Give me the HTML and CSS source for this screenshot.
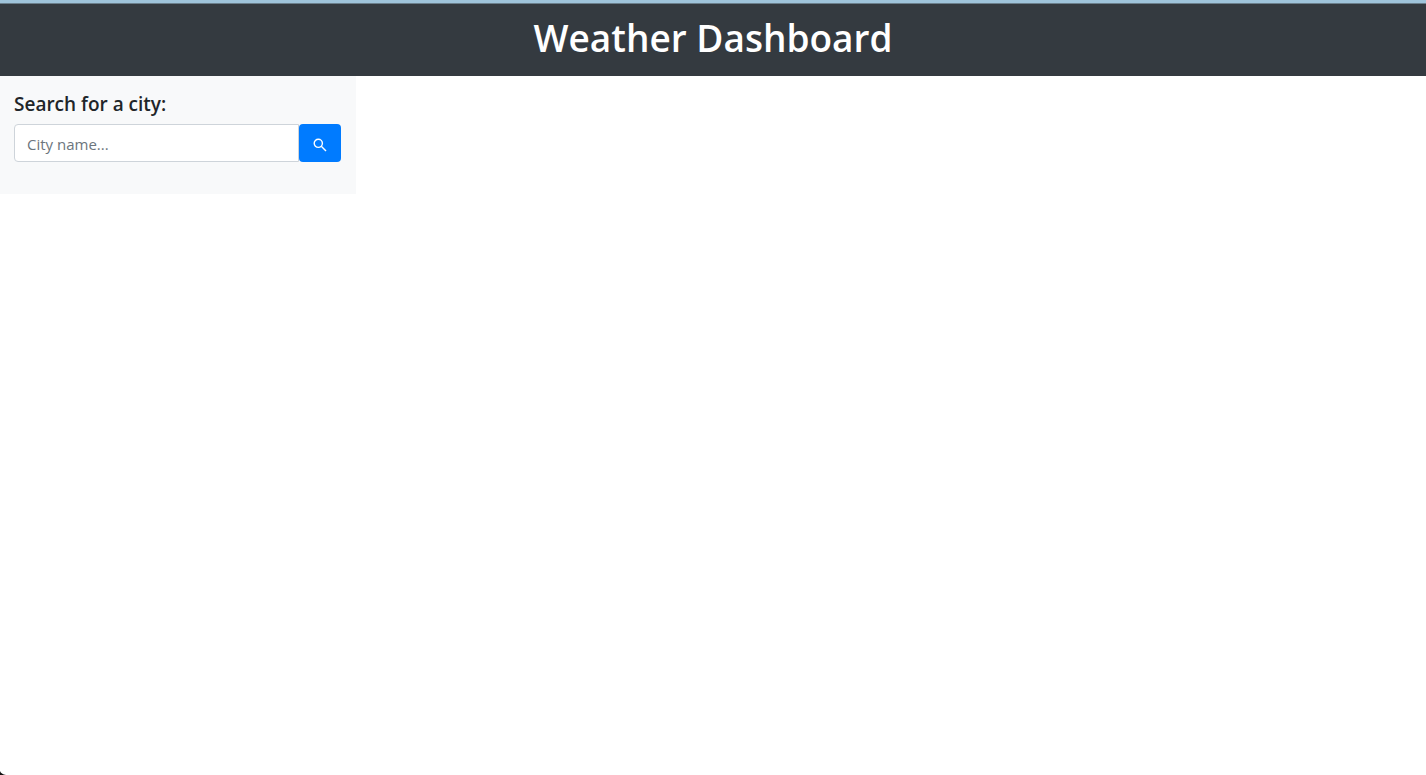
FILE: index.html
```html
<!DOCTYPE html>
<html lang="en">
<head>
<meta charset="utf-8">
<meta name="viewport" content="width=device-width, initial-scale=1">
<title>Weather Dashboard</title>
<link rel="stylesheet" href="styles.css">
</head>
<body>
<header class="header">
  <h1 class="title">Weather Dashboard</h1>
</header>
<main class="layout">
  <aside class="sidebar">
    <form class="search">
      <label class="search-label" for="city">Search for a city:</label>
      <div class="search-row">
        <input class="search-input" id="city" type="text" placeholder="City name...">
        <button class="search-button" type="button" aria-label="Search">
          <svg class="search-icon" viewBox="0 0 14 14" aria-hidden="true">
            <circle cx="5.3" cy="5.3" r="4.1"/>
            <path d="M8.3 8.3L13 13"/>
          </svg>
        </button>
      </div>
    </form>
  </aside>
</main>
<svg class="corner" viewBox="0 0 6 4" aria-hidden="true"><path d="M0 0Q1 3 6 4H0Z"/></svg>
</body>
</html>
```
FILE: styles.css
```css
* {
  box-sizing: border-box;
}

body {
  margin: 0;
  background: #fff;
  color: #212529;
  font: 400 15px/24px "Open Sans", "Noto Sans", sans-serif;
}

.header {
  padding: 12px 16px;
  border-top: 3px solid #9fc4db;
  background: #343a40;
  box-shadow: inset 0 1px #6b7f8c;
  text-align: center;
}

.title {
  margin: 0 0 4px;
  color: #fff;
  font-size: 37px;
  font-weight: 600;
  line-height: 45px;
}

.layout {
  display: grid;
  grid-template-columns: 1fr 3fr;
  padding-right: 2px;
}

.sidebar {
  padding: 16px 15px 32px 14px;
  background: #f8f9fa;
}

.search-label {
  display: block;
  margin-bottom: 8px;
  font-size: 19px;
  font-weight: 600;
  line-height: 24px;
}

.search-row {
  display: flex;
}

.search-input {
  flex: 1;
  min-width: 0;
  height: 38px;
  padding: 8px 12px 6px;
  border: 1px solid #ced4da;
  border-radius: 4px 0 0 4px;
  background: #fff;
  color: #495057;
  font: inherit;
}

.search-input::placeholder {
  color: #6c757d;
  opacity: 1;
}

.search-button {
  display: flex;
  align-items: center;
  justify-content: center;
  width: 42px;
  padding: 4px 0 0;
  border: 0;
  border-radius: 4px;
  background: #007bff;
}

.search-icon {
  width: 14px;
  height: 14px;
  fill: none;
  stroke: #fff;
  stroke-width: 1.4;
}

.corner {
  position: fixed;
  bottom: 0;
  left: 0;
  width: 6px;
  height: 4px;
  fill: #111;
}
```
